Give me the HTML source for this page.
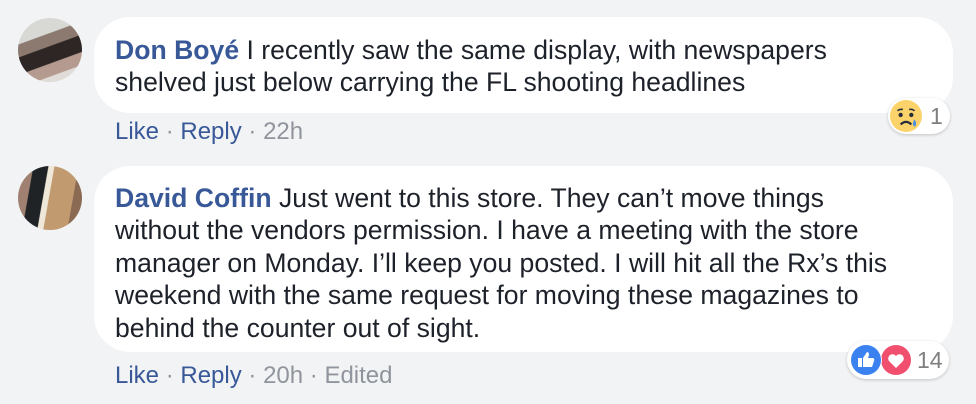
<!DOCTYPE html>
<html><head><meta charset="utf-8"><style>
body{margin:0;width:976px;height:404px;background:#f2f3f5;font-family:"Liberation Sans",Arial,sans-serif;position:relative;overflow:hidden}
.av{position:absolute;left:18px;width:64px;height:64px;border-radius:50%;overflow:hidden}
.b{position:absolute;left:94px;width:859px;background:#fff;border-radius:36px}
.t{position:absolute;left:115px;font-size:26.6px;line-height:32.4px;color:#1d2129;white-space:nowrap}
.n{color:#385898;font-weight:bold}
.m{position:absolute;left:115px;font-size:24px;color:#385898;white-space:nowrap}
.m .g{color:#90949c}
.pill{position:absolute;background:#fff;border-radius:20px;box-shadow:0 1px 3px rgba(0,0,0,.2);height:36px;font-size:23px;color:#7f7f7f}
</style></head><body>
<div class="av" style="top:18px;background:linear-gradient(160deg,#d8d8d4 0 30%,#8c7a70 31% 45%,#2d2624 46% 65%,#b59a90 66% 80%,#e0ddd8 81%)"></div>
<div class="av" style="top:166px;background:linear-gradient(100deg,#a08070 0 20%,#1f2326 21% 40%,#efe8d8 41% 48%,#c19a70 49% 80%,#8a6a52 81%)"></div>
<div class="b" style="top:17px;height:96px"></div>
<div class="t" style="top:34px"><span class="n">Don Boyé</span> I recently saw the same display, with newspapers<br>shelved just below carrying the FL shooting headlines</div>
<div class="m" style="top:118px">Like <span class="g">·</span> Reply <span class="g">· 22h</span></div>
<div class="pill" style="left:888px;top:98px;width:62px">
<svg style="position:absolute;left:2px;top:2px" width="32" height="32" viewBox="0 0 30 30"><circle cx="15" cy="15" r="15" fill="#fcd36b"/><circle cx="10" cy="14" r="2" fill="#262c38"/><circle cx="20" cy="14" r="2" fill="#262c38"/><path d="M7 10q3-2 5-1M18 9q2-1 5 1" stroke="#262c38" stroke-width="1.5" fill="none"/><path d="M10 23q5-5 10 0" stroke="#262c38" stroke-width="2" fill="none"/><path d="M23 18q-3 5 0 7q3-2 0-7z" fill="#4a90e2"/></svg>
<span style="position:absolute;left:42px;top:5px">1</span></div>
<div class="b" style="top:166px;height:186px"></div>
<div class="t" style="top:182px"><span class="n">David Coffin</span> Just went to this store. They can’t move things<br>without the vendors permission. I have a meeting with the store<br>manager on Monday. I’ll keep you posted. I will hit all the Rx’s this<br>weekend with the same request for moving these magazines to<br>behind the counter out of sight.</div>
<div class="m" style="top:362px">Like <span class="g">·</span> Reply <span class="g">· 20h · Edited</span></div>
<div class="pill" style="left:847px;top:341px;width:102px;height:38px">
<svg style="position:absolute;left:3px;top:3px" width="62" height="32" viewBox="0 0 62 32"><circle cx="46" cy="16" r="15" fill="#f0506e"/><path d="M46 24l-7-7a4 4 0 0 1 7-5a4 4 0 0 1 7 5z" fill="#fff"/><circle cx="16" cy="16" r="16" fill="#fff"/><circle cx="16" cy="16" r="15" fill="#3b82f0"/><rect x="8" y="14" width="4" height="9" fill="#fff"/><path d="M13 14l4-6q2 0 2 3l-1 3h5q2 1 1 3l-2 6h-9z" fill="#fff"/></svg>
<span style="position:absolute;left:70px;top:6px">14</span></div>
</body></html>
